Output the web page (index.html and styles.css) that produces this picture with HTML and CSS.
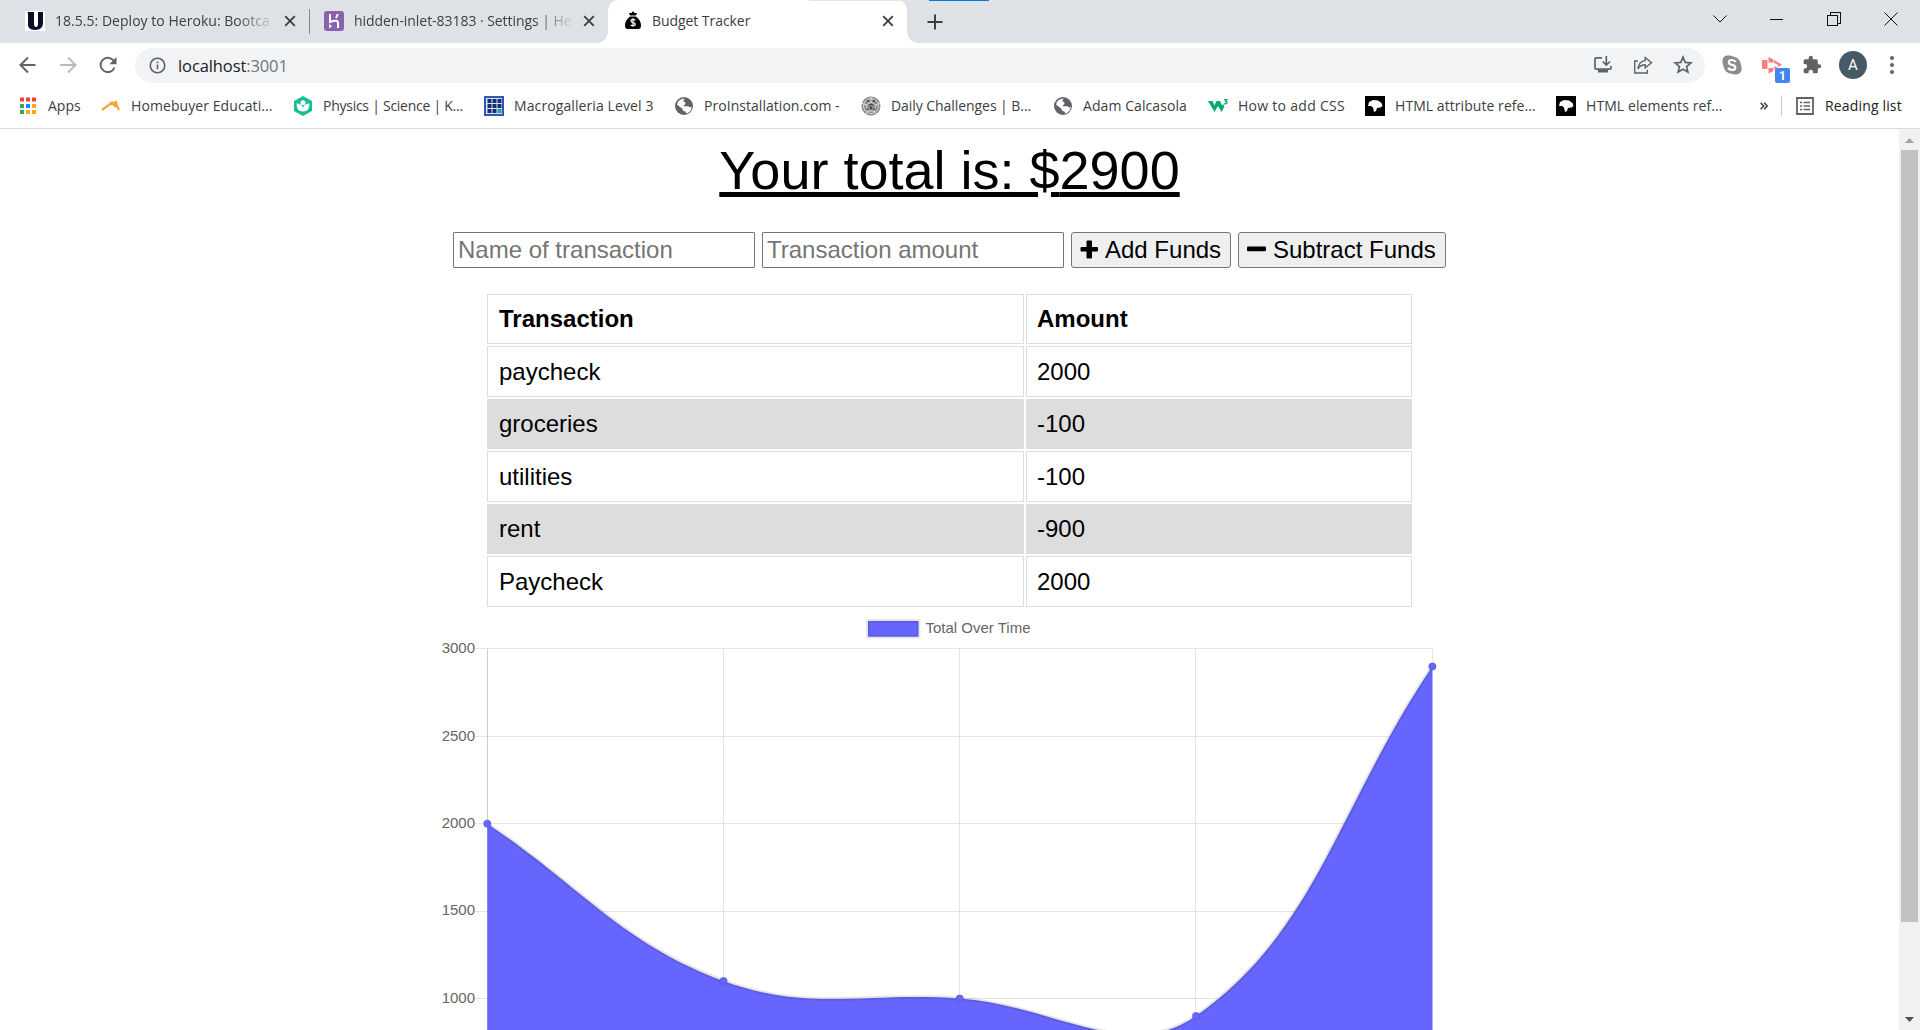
FILE: index.html
```html
<!DOCTYPE html>
<html lang="en">
<head>
<meta charset="utf-8">
<title>Budget Tracker</title>
<link rel="stylesheet" href="styles.css">
</head>
<body>
<div class="window">
  <div class="desktop-edge"><i></i></div>
  <header class="tabstrip">
    <div class="tab tab-first">
      <svg class="fav" viewBox="0 0 20 20"><path fill="#fff" d="M0 0h20v20H0z"/><path fill="#0a0f2c" d="M2 1h7v12q0 3 2 3t2-3V1h5v11q0 7-8 7t-7-7V2z"/></svg>
      <span class="tab-title fade t1">18.5.5: Deploy to Heroku: Bootca</span>
      <svg class="close" viewBox="0 0 12 12"><path d="M1.2 1.2l9.6 9.6M10.8 1.2l-9.6 9.6"/></svg>
    </div>
    <div class="tab-sep"></div>
    <div class="tab tab-second">
      <svg class="fav" viewBox="0 0 20 20"><rect width="20" height="20" rx="3" fill="#8a63ae"/><path fill="none" stroke="#fff" stroke-width="2" d="M6 3v8q8-3 8 1v5M13.5 3q0 2-1.6 4"/><path fill="#fff" d="M5 13l3 2.3L5 17.6z"/></svg>
      <span class="tab-title fade t2">hidden-inlet-83183 · Settings | He</span>
      <svg class="close" viewBox="0 0 12 12"><path d="M1.2 1.2l9.6 9.6M10.8 1.2l-9.6 9.6"/></svg>
    </div>
    <div class="tab tab-active">
      <svg class="fav" viewBox="0 0 20 20"><path d="M6 2h2.500l1-1.500h1l1 1.500H14l-1 2.500H7z"/><path d="M7 5.500h6c3 2.500 5 5.500 5 8.500s-1 4-3 4H5c-2 0-3-1-3-4s2-6 5-8.500z"/><path d="M12.300 9.300q-.8-.9-2.300-.9-2 0-2 1.500T10 11.500q2.300.4 2.300 1.800T10 14.700q-1.500 0-2.400-.9M10 7.300v8.500" fill="none" stroke="#fff" stroke-width="1.200"/></svg>
      <span class="tab-title t3">Budget Tracker</span>
      <svg class="close" viewBox="0 0 12 12"><path d="M1.2 1.2l9.6 9.6M10.8 1.2l-9.6 9.6"/></svg>
    </div>
    <svg class="newtab" viewBox="0 0 16 16"><path d="M8 .5v15M.5 8h15" /></svg>
    <div class="winbtns">
      <svg viewBox="0 0 14 14"><path d="M.5 3.500L7 10l6.500-6.500"/></svg>
      <svg viewBox="0 0 14 14"><path class="crisp" d="M0 7.500h13"/></svg>
      <svg viewBox="0 0 14 14"><path class="crisp" d="M.5 3.500h10v10H.5zM3 3V.5h10.500v10.500H11"/></svg>
      <svg viewBox="0 0 14 14"><path d="M.5 .5l13 13M13.500 .5L.5 13.500"/></svg>
    </div>
  </header>
  <div class="toolbar">
    <svg class="nav" viewBox="0 0 20 20"><path d="M17.500 10H3M10 2.500L2.500 10l7.500 7.500"/></svg>
    <svg class="nav dim" viewBox="0 0 20 20"><path d="M2 10h15M10 2.500l7.500 7.500-7.500 7.500"/></svg>
    <svg class="nav" viewBox="0 0 20 20"><path d="M16.500 12.500A7.200 7.200 0 1 1 15.500 5.500"/><path class="solid" d="M18.500 2v7.200h-7.200z"/></svg>
    <div class="omnibox">
      <svg class="info" viewBox="0 0 18 18"><circle cx="9" cy="9" r="7.700"/><path d="M9 8v5M9 4.700v1.900"/></svg>
      <span class="url">localhost<i>:3001</i></span>
      <svg class="om" viewBox="0 0 20 20"><path d="M9 2.800H3.200q-1.200 0-1.200 1.200v9q0 1.200 1.200 1.200h13.600q1.200 0 1.200-1.200v-2M13.300 1v8.500M9.600 6.500l3.700 3.500 3.700-3.500"/><path class="solid" d="M5 14h10v3.500H5z"/></svg>
      <svg class="om" viewBox="0 0 20 20"><path stroke-width="1.400" d="M5 6H1.700v12h12.600v-3.200M12.200 2.500L18.500 7.700l-6.300 5V9.800q-4.500 0-7.300 4 .9-7.600 7.300-8.200z"/></svg>
      <svg class="om" viewBox="0 0 20 20"><path d="M10 2.200l2.200 5.200 5.700.5-4.300 3.700 1.300 5.500L10 14.200l-4.900 2.900 1.300-5.500-4.300-3.700 5.700-.5z"/></svg>
    </div>
    <svg class="ext skype" viewBox="0 0 20 20"><rect x=".5" y=".5" width="12" height="12" rx="5"/><rect x="7.500" y="7.500" width="12" height="12" rx="5"/><circle cx="10" cy="10" r="8.700"/><path d="M13.600 7q-1-2-3.700-2Q6.800 5 6.800 7.300 6.800 9.300 10 9.900t3.300 2.500q0 2.500-3.400 2.500-3 0-3.700-2.200"/></svg>
    <div class="ext badge-wrap">
      <svg viewBox="0 0 20 17"><path fill="#ff7f7f" d="M0 3h5.500v9H0zM6.500 0l5 2.500v3h-5zM6.500 11h5v3l-5 2.500zM12 3l8 4.500-4 2.500v-2l-4-2.200zM12 10l2-.8 1 1.500-3 1.500z"/></svg>
      <b>1</b>
    </div>
    <svg class="ext puzzle" viewBox="0 0 24 24"><path d="M20.500 11H19V7c0-1.100-.9-2-2-2h-4V3.500a2.500 2.500 0 0 0-5 0V5H4c-1.100 0-2 .9-2 2v3.800h1.500a2.700 2.700 0 0 1 0 5.400H2V20c0 1.100.9 2 2 2h3.800v-1.500a2.700 2.700 0 0 1 5.400 0V22H17c1.100 0 2-.9 2-2v-4h1.500a2.500 2.500 0 0 0 0-5z"/></svg>
    <span class="avatar">A</span>
    <svg class="menu" viewBox="0 0 4 18"><circle cx="2" cy="2" r="2"/><circle cx="2" cy="9" r="2"/><circle cx="2" cy="16" r="2"/></svg>
  </div>
  <nav class="bookmarks">
    <a class="b-apps"><svg viewBox="0 0 20 20"><path fill="#ea4335" d="M2 1.500h4v4H2zM8 1.500h4v4H8zM14 1.500h4v4h-4z"/><path fill="#34a853" d="M2 8h4v4H2zM2 14h4v4H2z"/><path fill="#1e88f0" d="M8 8h4v4H8z"/><path fill="#fba90a" d="M14 8h4v4h-4zM8 14h4v4H8zM14 14h4v4h-4z"/></svg><span>Apps</span></a>
    <a class="b-home"><svg viewBox="0 0 20 20"><path fill="none" stroke="#f8a33a" stroke-width="2.200" d="M1 14L11 6.500l4 4.500M10 8.500L15 6l1 4 2 4"/></svg><span>Homebuyer Educati...</span></a>
    <a class="b-phys"><svg viewBox="0 0 20 20"><path fill="#14bf96" d="M10 0l9 5v10l-9 5-9-5V5z"/><circle cx="10" cy="6.700" r="2.500" fill="#fff"/><path fill="#fff" d="M3.500 7.500q5.500 0 6.500 4.500 1-4.500 6.500-4.500 0 8-6.500 8t-6.500-8z"/></svg><span>Physics | Science | K...</span></a>
    <a class="b-macro"><svg viewBox="0 0 20 20"><path fill="#3156b5" d="M0 0h20v20H0z"/><path fill="#dce0ec" d="M2 2h16v16H2z"/><path fill="#123078" d="M3.500 3h4v4h-4zM8.500 3h4v4h-4zM13.500 3h4v4h-4zM3.500 8h4v4h-4zM8.500 8h4v4h-4zM13.500 8h4v4h-4zM3.500 13h4v4h-4zM8.500 13h4v4h-4z"/><path fill="#17a6a0" d="M13.500 13h4v4h-4z"/></svg><span>Macrogalleria Level 3</span></a>
    <a class="b-pro"><svg viewBox="0 0 20 20"><circle cx="10" cy="10" r="9" fill="#5f6368"/><path fill="#fff" d="M11 2.500q-2 1-1.500 3 2 0 2 1.800 0 1.500-1.500 1.700v1.200h4.500q1.500 2 3.300.2-.5 5.600-5.300 7-.7-2.600-3.500-2.700 0-2.500-2-3L3 8.500Q4 2.800 11 2.500z"/></svg><span>ProInstallation.com -</span></a>
    <a class="b-daily"><svg viewBox="0 0 20 20"><circle cx="10" cy="10" r="9.500" fill="#888"/><g fill="none" stroke="#ddd" stroke-width="1"><circle cx="10" cy="10" r="7.500"/><path d="M10 1v5l5 3 4-2M15 9l-2 6 2 3M13 15H7l-2 3M7 15L5 9 1 7M5 9l5-3"/></g><path fill="#444" d="M8 8h4v1H8zM6 12l2 2H6zM14 12l-2 2h2zM9 10.500h2V13H9zM6 4h2v1.500H6zM12 4h2v1.500h-2z"/></svg><span>Daily Challenges | B...</span></a>
    <a class="b-adam"><svg viewBox="0 0 20 20"><circle cx="10" cy="10" r="9" fill="#5f6368"/><path fill="#fff" d="M11 2.500q-2 1-1.500 3 2 0 2 1.800 0 1.500-1.500 1.700v1.200h4.500q1.500 2 3.300.2-.5 5.600-5.300 7-.7-2.600-3.500-2.700 0-2.500-2-3L3 8.500Q4 2.800 11 2.500z"/></svg><span>Adam Calcasola</span></a>
    <a class="b-css"><svg viewBox="0 0 20 20"><path fill="#04aa6d" d="M0 5h4.500l2 4.500L8.500 5H12l2 4.500L15 8l1.500 2.500L13.500 16 10 10l-3.500 6z"/><path fill="none" stroke="#04aa6d" stroke-width="1.200" d="M16 3.600h3l-1.500 2q2 .2 1.300 1.800-1 1-2.800.2"/></svg><span>How to add CSS</span></a>
    <a class="b-attr"><svg viewBox="0 0 20 20"><path d="M0 0h20v20H0z"/><path fill="#fff" d="M3 10l1-4 4-2 5 .5 3.500 2.500 1 3-2 1.500-3.500.5-1 3-2 1-1-4.500L6 10z"/></svg><span>HTML attribute refe...</span></a>
    <a class="b-elem"><svg viewBox="0 0 20 20"><path d="M0 0h20v20H0z"/><path fill="#fff" d="M3 10l1-4 4-2 5 .5 3.500 2.500 1 3-2 1.500-3.500.5-1 3-2 1-1-4.500L6 10z"/></svg><span>HTML elements ref...</span></a>
    <svg class="more" viewBox="0 0 8 8"><path d="M.7.7L3.700 4l-3 3.300M4.200.7l3 3.300-3 3.300"/></svg>
    <div class="reading"><svg viewBox="0 0 18 18"><path fill="none" stroke="#5f6368" stroke-width="1.800" d="M1 1h16v16H1z"/><path fill="none" stroke="#5f6368" stroke-width="1.600" d="M4 5.500h2M7.500 5.500H14M4 9h2M7.500 9H14M4 12.500h2M7.500 12.500H14"/></svg><span>Reading list</span></div>
  </nav>
  <div class="viewport">
    <main class="page">
      <div class="total">Your total is: $<span>2900</span></div>
      <form class="form">
        <input type="text" placeholder="Name of transaction">
        <input type="text" placeholder="Transaction amount">
        <button type="button" class="add"><svg viewBox="0 0 20 20"><path d="M8 1.500h4q1 0 1 1V8h5q1 0 1 1v2.500q0 1-1 1h-5v6q0 1-1 1H8.500q-1 0-1-1v-6h-5q-1 0-1-1V9q0-1 1-1h5V2.500q0-1 1-1z"/></svg>Add Funds</button>
        <button type="button" class="sub"><svg viewBox="0 0 20 20"><rect x="1" y="7.500" width="19" height="4.700" rx="1"/></svg>Subtract Funds</button>
      </form>
      <table class="ledger">
        <thead><tr><th>Transaction</th><th>Amount</th></tr></thead>
        <tbody>
          <tr><td>paycheck</td><td>2000</td></tr>
          <tr><td>groceries</td><td>-100</td></tr>
          <tr><td>utilities</td><td>-100</td></tr>
          <tr><td>rent</td><td>-900</td></tr>
          <tr><td>Paycheck</td><td>2000</td></tr>
        </tbody>
      </table>
      <svg class="chart" viewBox="430 607 1040 423">
        <g class="grid">
          <path d="M475 648.500H1432M475 736.500H1432M475 823.500H1432M475 911.500H1432M475 998.500H1432M723.500 649V1030M959.500 649V1030M1195.500 649V1030M1432.500 649V1030"/>
          <path class="axis" d="M487.500 649V1030"/>
        </g>
        <path class="area" d="M487.300 823.700C581.800 886.600 620.500 942.900 723.500 981C809.500 1012.800 865.200 991.500 959.700 998.500C1054.200 1005.500 1128.100 1063.700 1196 1016C1317 931 1337.900 806.200 1432.400 666.400V1174H487.300z"/>
        <path class="line" d="M487.300 823.700C581.800 886.600 620.500 942.900 723.500 981C809.500 1012.800 865.200 991.500 959.700 998.500C1054.200 1005.500 1128.100 1063.700 1196 1016C1317 931 1337.900 806.200 1432.400 666.400"/>
        <g class="points"><circle cx="487.300" cy="823.700" r="3.750"/><circle cx="723.500" cy="981" r="3.750"/><circle cx="959.700" cy="998.500" r="3.750"/><circle cx="1196" cy="1016" r="3.750"/><circle cx="1432.400" cy="666.400" r="3.750"/></g>
        <g class="legend"><rect x="868" y="621" width="50.500" height="15.700"/><text x="925.500" y="633">Total Over Time</text></g>
        <g class="ticks"><text x="475" y="653">3000</text><text x="475" y="741">2500</text><text x="475" y="828">2000</text><text x="475" y="915">1500</text><text x="475" y="1003">1000</text></g>
      </svg>
    </main>
    <aside class="scrollbar">
      <svg viewBox="0 0 9 5"><path fill="#a3a3a3" d="M0 5L4.500 0 9 5z"/></svg>
      <div class="thumb"></div>
      <svg viewBox="0 0 9 5"><path fill="#505050" d="M0 0h9L4.500 5z"/></svg>
    </aside>
  </div>
</div>
</body>
</html>
```
FILE: styles.css
```css
* { box-sizing: border-box; }
body { margin: 0; background: #fff; overflow: hidden; }
svg { display: block; flex: none; }
.window { position: relative; width: 1920px; height: 1030px; display: flex; flex-direction: column; overflow: hidden; font-family: "Open Sans", "Noto Sans", sans-serif; color: #3c4043; }

/* tab strip */
.desktop-edge { position: absolute; z-index: 2; top: 0; left: 809px; width: 301px; height: 1px; padding-left: 120px; background: #e5e5e5; }
.desktop-edge i { display: block; width: 60px; height: 1px; background: #0078d7; }
.tabstrip { flex: none; height: 43px; display: flex; align-items: stretch; background: #dee1e6; }
.tab { display: flex; align-items: center; font-size: 14px; padding-bottom: 2px; }
.tab-first { width: 309px; padding-right: 13px; padding-left: 25px; }
.tab-second { width: 298px; padding-right: 13px; padding-left: 14px; }
.tab-active { position: relative; width: 299px; padding-right: 13px; padding-left: 15px; background: #fff; border-radius: 10px 10px 0 0; }
.tab-active::before, .tab-active::after { content: ""; position: absolute; bottom: 0; width: 11px; height: 11px; }
.tab-active::before { left: -11px; background: radial-gradient(circle at 0 0, transparent 10.500px, #fff 11px); }
.tab-active::after { right: -11px; background: radial-gradient(circle at 100% 0, transparent 10.500px, #fff 11px); }
.tab-sep { align-self: center; width: 1px; height: 25px; background: #85888d; }
.fav { width: 20px; height: 20px; margin-right: 10px; }
.tab-title { flex: 1; white-space: nowrap; }
.fade { -webkit-mask-image: linear-gradient(90deg, #000 calc(100% - 40px), transparent 100%); mask-image: linear-gradient(90deg, #000 calc(100% - 40px), transparent 100%); }
.t1 { letter-spacing: .03px; }
.t2 { letter-spacing: -.05px; }
.t3 { letter-spacing: -.06px; margin-left: -1px; }
.close { width: 12px; height: 12px; margin-left: 8px; fill: none; stroke: #3c4043; stroke-width: 1.900; }
.newtab { width: 16px; height: 16px; align-self: center; margin-left: 20px; fill: none; stroke: #3c4043; stroke-width: 2; }
.winbtns { display: flex; align-items: center; gap: 43px; margin-left: auto; padding: 0 22px 6px 0; }
.winbtns svg { width: 14px; height: 14px; fill: none; stroke: #111; stroke-width: 1; }
.crisp { shape-rendering: crispEdges; }

/* toolbar */
.toolbar { flex: none; height: 44px; display: flex; align-items: center; padding-left: 18px; }
.nav { width: 20px; height: 20px; margin-right: 20px; fill: none; stroke: #5f6368; stroke-width: 2; }
.nav.dim { stroke: #b9bbbe; }
.nav .solid, .om .solid { fill: #5f6368; stroke: none; }
.omnibox { width: 1570px; height: 35px; margin-left: -3px; padding: 0 12px 0 14px; display: flex; align-items: center; gap: 20px; background: #f1f3f4; border-radius: 18px; }
.info { width: 17px; height: 17px; fill: none; stroke: #5f6368; stroke-width: 1.700; }
.url { flex: 1; margin-left: -8px; padding-top: 1px; font-size: 16.500px; letter-spacing: -.1px; color: #202124; }
.url i { font-style: normal; color: #70757a; }
.om { width: 20px; height: 20px; fill: none; stroke: #5f6368; stroke-width: 1.700; }
.ext { width: 20px; height: 20px; }
.skype { margin-left: 17px; fill: #8c8c8c; }
.skype path { fill: none; stroke: #fff; stroke-width: 2.200; }
.badge-wrap { position: relative; margin-left: 20px; }
.badge-wrap svg { width: 20px; height: 17px; margin-top: 2px; }
.badge-wrap b { position: absolute; left: 13px; top: 13px; width: 15px; height: 15px; border-radius: 2px; background: #4285f4; color: #fff; font: bold 12px/16px Roboto, sans-serif; text-align: center; }
.puzzle { margin-left: 20px; fill: #5f6368; }
.avatar { width: 28px; height: 28px; margin-left: 17px; border-radius: 50%; background: #455a64; color: #fff; font: 15px/29px Roboto, sans-serif; text-align: center; }
.menu { width: 4px; height: 18px; margin-left: 23px; fill: #5f6368; }

/* bookmarks */
.bookmarks { flex: none; height: 42px; display: flex; align-items: center; padding: 0 0 3px 18px; border-bottom: 1px solid #dadce0; font-size: 14px; }
.bookmarks a { display: flex; align-items: center; white-space: nowrap; }
.bookmarks a svg { width: 20px; height: 20px; margin-right: 10px; }
.bookmarks span { margin-top: -2px; }
.b-apps { width: 83px; }
.b-home { width: 192px; letter-spacing: .08px; }
.b-phys { width: 191px; letter-spacing: -.26px; }
.b-macro { width: 190px; letter-spacing: .1px; }
.b-pro { width: 187px; letter-spacing: .04px; }
.b-daily { width: 192px; letter-spacing: -.06px; }
.b-adam { width: 155px; letter-spacing: .08px; }
.b-css { width: 157px; letter-spacing: .28px; }
.b-attr { width: 191px; letter-spacing: .06px; }
.b-elem { width: 204px; letter-spacing: .08px; }
.more { width: 8px; height: 8px; fill: none; stroke: #3c4043; stroke-width: 1.500; }
.reading { display: flex; align-items: center; height: 20px; margin-left: 13px; padding-left: 14px; border-left: 1px solid #c6c9cd; color: #202124; white-space: nowrap; letter-spacing: .16px; }
.reading svg { width: 18px; height: 18px; margin-right: 11px; }

/* page */
.viewport { flex: 1; min-height: 0; display: flex; }
.page { flex: 1; min-width: 0; display: flex; flex-direction: column; align-items: center; overflow: hidden; font-family: "Liberation Sans", Arial, sans-serif; color: #000; }
.total { flex: none; height: 103px; padding-top: 10px; font-size: 54px; line-height: 62px; text-decoration: underline 5px; text-underline-offset: 3px; white-space: nowrap; }
.form { flex: none; display: flex; gap: 7px; height: 36px; }
.form input { width: 302px; height: 36px; padding: 0 4px; border: 1px solid #767676; border-radius: 1px; font: 24px "Liberation Sans", Arial, sans-serif; }
.form input::placeholder { color: #757575; }
.form button { display: flex; align-items: center; height: 36px; padding: 0 8px; border: 1px solid #767676; border-radius: 3px; background: #efefef; color: #000; font: 24px "Liberation Sans", Arial, sans-serif; white-space: nowrap; }
.form button svg { width: 20px; height: 20px; margin: -3px 6px 0 -1px; }
.form .sub svg { margin-right: 7px; }
.add { width: 160px; }
.sub { width: 208px; }
.ledger { flex: none; width: 929px; margin-top: 24px; table-layout: fixed; border-collapse: separate; border-spacing: 2px; font-size: 24px; }
.ledger th, .ledger td { height: 50.600px; padding: 0 11px; border: 1px solid #ddd; text-align: left; }
.ledger th:last-child, .ledger td:last-child { padding-left: 10px; }
.ledger th { height: 50px; }
.ledger th:first-child { width: 537px; }
.ledger tbody tr:nth-child(-n+3) td { padding-top: 1px; }
.ledger tbody tr:nth-child(even) { background: #ddd; }
.chart { width: 1040px; height: 423px; margin-top: -2px; font: 15px "Liberation Sans", Arial, sans-serif; }
.grid path { fill: none; stroke: rgba(0, 0, 0, .1); stroke-width: 1; }
.grid .axis { stroke: rgba(0, 0, 0, .2); }
.area { fill: #6666ff; }
.line { fill: none; stroke: rgba(0, 0, 0, .1); stroke-width: 3.750; }
.points circle { fill: #6666ff; stroke: rgba(0, 0, 0, .1); stroke-width: 1.250; }
.legend rect { fill: #6666ff; stroke: rgba(0, 0, 0, .1); stroke-width: 3.750; }
.legend text, .ticks text { fill: #666; }
.ticks text { text-anchor: end; }

/* scrollbar */
.scrollbar { flex: none; width: 21px; display: flex; flex-direction: column; align-items: center; justify-content: space-between; padding: 9px 0 8px; background: #f1f1f1; }
.scrollbar svg { width: 9px; height: 5px; }
.thumb { width: 17px; height: 772px; margin: 7px 0 auto; background: #c1c1c1; }
```
